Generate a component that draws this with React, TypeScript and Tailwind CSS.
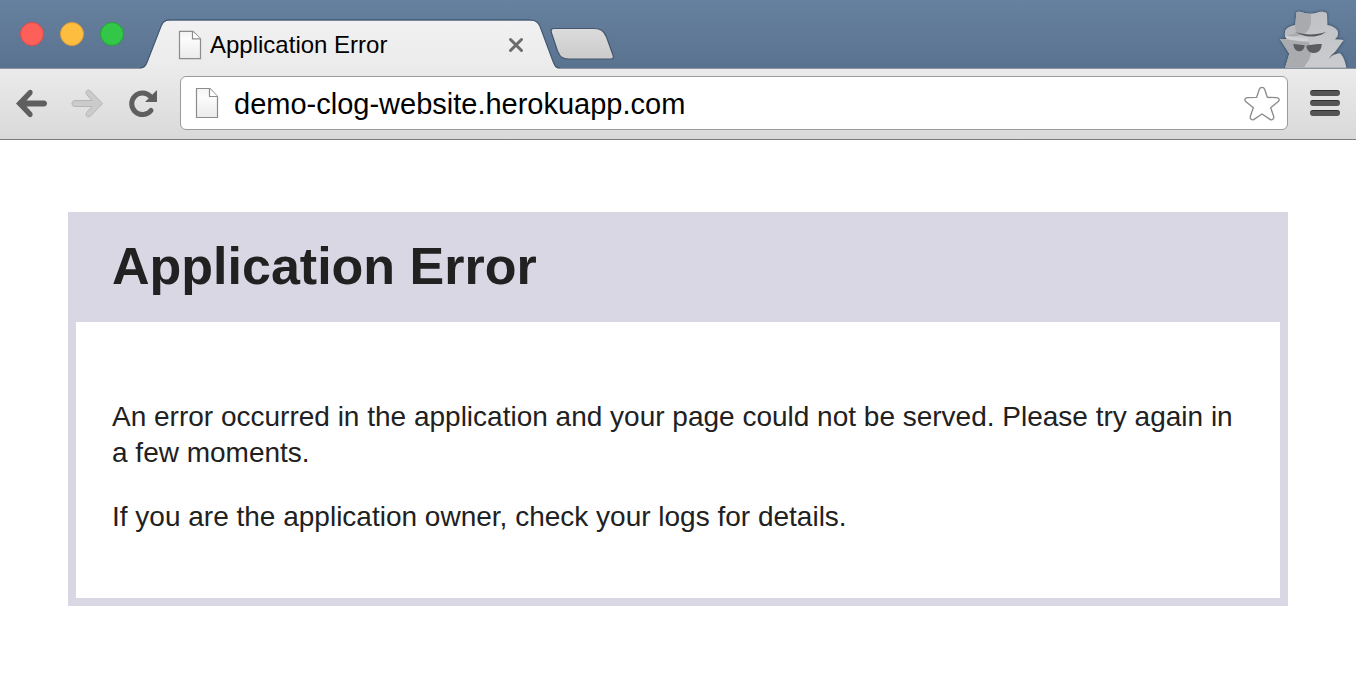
import React, { useState } from "react";

function PageIcon({ className }: { className: string }) {
  return (
    <svg className={className} viewBox="0 0 24 32" fill="none" preserveAspectRatio="none" aria-hidden="true">
      <defs>
        <linearGradient id="paper" x1="0" y1="0" x2="0" y2="1">
          <stop offset="0" stopColor="#f4f4f4" />
          <stop offset="0.3" stopColor="#fcfcfc" />
          <stop offset="1" stopColor="#ebebeb" />
        </linearGradient>
      </defs>
      <path d="M1.5 1.5H15L22.5 9.5V30.5H1.5Z" fill="url(#paper)" stroke="#8c8c8c" strokeWidth="1.2" />
      <path d="M14.5 1.5V9.5H22.5" stroke="#8c8c8c" fill="#fff" strokeWidth="1.2" />
    </svg>
  );
}

function TabShape() {
  const edge =
    "M0 50.5C4 50.5 5.500 49 7 45L21 9C23 4 25 2.500 31 2.500H389C395 2.500 398 4 400 9L413 44C415 49 416 50.5 420 50.5";
  return (
    <svg className="absolute inset-0 h-full w-full" viewBox="0 0 420 51" fill="none" aria-hidden="true">
      <defs>
        <linearGradient id="tab" x1="0" y1="0" x2="0" y2="1">
          <stop offset="0" stopColor="#f1f1f1" />
          <stop offset="1" stopColor="#ebebeb" />
        </linearGradient>
      </defs>
      <path d={edge + "V51H0Z"} fill="url(#tab)" />
      <path d={edge} stroke="#435872" strokeWidth="1.2" transform="translate(0 -.6)" />
      <path d="M5 51V50H415V51Z" fill="#ebebeb" />
    </svg>
  );
}

function Incognito() {
  const outline =
    "M178 206C183 184 190 172 189 162L162 120L184 121C177 117 176 108 177 99C179 88 193 81 208 78L211 42C214 36 223 39 232 41C243 45 259 45 270 42C282 37 300 36 303 45L304 78C320 81 334 89 336 100C337 109 333 117 326 121L353 123L322 166C330 168 336 162 341 163C352 171 357 187 361 206Z";
  return (
    <svg className="h-[59px] w-[74px]" viewBox="150 30 222 177" role="img" aria-label="Incognito">
      <defs>
        <filter id="glow" x="-20%" y="-20%" width="140%" height="140%">
          <feDropShadow dx="0" dy="0" stdDeviation="5" floodColor="#26364a" floodOpacity="1" />
        </filter>
        <linearGradient id="coat" x1="0" y1="0" x2="0" y2="1">
          <stop offset="0" stopColor="#bfc1c4" />
          <stop offset="1" stopColor="#cacccf" />
        </linearGradient>
        <clipPath id="agent">
          <path d={outline} />
        </clipPath>
      </defs>
      <path filter="url(#glow)" fill="url(#coat)" d={outline} />
      <g clipPath="url(#agent)">
        <path d="M170 110C190 114 210 114 233 106C253 93 260 70 252 34H208V78L196 82C210 90 215 98 200 104Z" fill="#a8aaad" />
        <path d="M177 88L208 78V104L176 108Z" fill="#b9bbbe" />
        <path d="M176 108C200 116 222 117 246 117V128C220 127 200 124 182 121Z" fill="#cfd0d2" />
        <path d="M155 117L184 121C205 126 228 128 248 128C257 145 258 162 250 180C245 190 238 198 234 206H165Z" fill="#a9abae" />
        <path d="M309 180C313 169 323 162 342 146L323 168C318 169 314 174 309 180Z" fill="#55585b" />
      </g>
      <path d="M209 98C234 109 272 109 300 98C280 117 232 117 209 98Z" fill="#55585b" />
      <path d="M202 135C213 136 224 137 236 139C235 150 229 157 220 157C210 157 203 148 202 135Z" fill="#5b5d60" />
      <path d="M241 140C255 137 272 135 287 135C287 151 278 162 264 162C251 162 242 154 241 140Z" fill="#5b5d60" />
    </svg>
  );
}

function TabStrip() {
  return (
    <header className="flex h-[69px] items-end justify-between bg-linear-to-b from-[#66819f] to-[#59728f] shadow-[inset_0_-1px_0_#8d949b]">
      <div className="flex items-end self-stretch">
        <div className="flex w-[140px] gap-4 self-start pt-[22px] pl-5">
          <button aria-label="Close window" className="size-6 rounded-full border border-[#e2494a] bg-[#fd6059]" />
          <button aria-label="Minimize window" className="size-6 rounded-full border border-[#dfa035] bg-[#fdbe40]" />
          <button aria-label="Zoom window" className="size-6 rounded-full border border-[#22a334] bg-[#33c748]" />
        </div>
        <div className="relative h-[51px] w-[420px]">
          <TabShape />
          <div className="relative flex h-full items-center gap-2 pt-0.5 pr-9 pl-[38px]">
            <PageIcon className="h-[30px] w-6" />
            <span className="flex-1 text-2xl leading-8 text-black">Application Error</span>
            <button aria-label="Close tab" className="flex size-4 items-center justify-center">
              <svg className="size-4" viewBox="0 0 16 16" fill="none">
                <path d="M2.500 2.500L13.500 13.500M13.500 2.500L2.500 13.500" stroke="#6b6b6b" strokeWidth="3" strokeLinecap="round" />
              </svg>
            </button>
          </div>
        </div>
        <button aria-label="New tab" className="-ml-2.5 mb-2">
          <svg className="h-[34px] w-[66px]" viewBox="0 0 66 34" fill="none">
            <defs>
              <linearGradient id="newtab" x1="0" y1="0" x2="0" y2="1">
                <stop offset="0" stopColor="#dcdcdc" />
                <stop offset="1" stopColor="#cbcbcb" />
              </linearGradient>
            </defs>
            <path
              d="M4 1.500H44C51 1.500 54 4 56.500 10L63 28C64 31 63 32 61 32H19C12 32 10 30 7.500 24L1.500 6C.5 3 1.500 1.500 4 1.500Z"
              fill="url(#newtab)"
              stroke="#43566e"
              strokeWidth="1.2"
            />
          </svg>
        </button>
      </div>
      <div className="pr-1.5 pb-px">
        <Incognito />
      </div>
    </header>
  );
}

function Toolbar() {
  const [url, setUrl] = useState("demo-clog-website.herokuapp.com");
  return (
    <nav
      aria-label="Browser toolbar"
      className="flex h-[71px] items-center border-b border-[#7b7b7b] bg-linear-to-b from-[#ebebeb] to-[#d9d9d9] pr-4 pb-0.5 pl-[15px]"
    >
      <div className="flex items-center gap-[22px]">
        <button aria-label="Back">
          <svg className="h-[30px] w-[34px]" viewBox="0 0 34 30" fill="none">
            <path d="M1 15.500L13 3C16 0 19 3.500 17 6.500L11.500 12.500H29C33 12.500 33 18.500 29 18.500H11.500L17 24.500C19 27.500 16 31 13 28Z" fill="#5f5f5f" />
          </svg>
        </button>
        <button aria-label="Forward" disabled>
          <svg className="h-[30px] w-[34px]" viewBox="0 0 34 30" fill="none">
            <path d="M31.500 15.500L19.500 3C16.500 .5 14 3.500 15.500 6.500L21 12.500H4C0 12.500 0 18.500 4 18.500H21L15.500 24.500C14 27.500 16.500 30.500 19.500 28Z" fill="#cbcbcb" stroke="#b5b5b5" />
          </svg>
        </button>
        <button aria-label="Reload">
          <svg className="h-[30px] w-8" viewBox="0 0 32 30" fill="none">
            <path d="M23.500 8.500A10.800 10.800 0 1 0 24 22.500" stroke="#5f5f5f" strokeWidth="5" strokeLinecap="round" />
            <path d="M30 2V14H18Z" fill="#5f5f5f" />
          </svg>
        </button>
      </div>
      <div className="ml-[21px] flex h-[54px] flex-1 items-center rounded-md border border-[#9b9b9b] bg-white pr-1.5 pl-3.5">
        <PageIcon className="h-8 w-6" />
        <input
          aria-label="Address"
          value={url}
          onChange={(e) => setUrl(e.target.value)}
          className="ml-[15px] h-10 min-w-0 flex-1 bg-transparent pt-1 text-[29px] text-black outline-none"
        />
        <button aria-label="Bookmark this page">
          <svg className="h-[37px] w-[38px]" viewBox="50 251 114 111" fill="none">
            <path
              d="M99 264C102 256 112 256 115 264L123 288L151 289C160 290 161 297 154 302L133 319L142 345C144 353 137 358 131 354L107 338L83 354C77 358 70 353 72 345L81 319L60 302C53 297 54 290 63 289L91 288Z"
              stroke="#8b8b8b"
              strokeWidth="4"
              strokeLinejoin="round"
            />
          </svg>
        </button>
      </div>
      <button aria-label="Menu" className="ml-[22px] flex flex-col gap-1">
        <span className="h-1.5 w-[30px] rounded-full border-t border-[#2f2f2f] bg-[#555555]" />
        <span className="h-1.5 w-[30px] rounded-full border-t border-[#2f2f2f] bg-[#555555]" />
        <span className="h-1.5 w-[30px] rounded-full border-t border-[#2f2f2f] bg-[#555555]" />
      </button>
    </nav>
  );
}

export default function App() {
  return (
    <div className="min-h-screen bg-white font-['Liberation_Sans',Arial,sans-serif]">
      <TabStrip />
      <Toolbar />
      <main className="px-[68px] py-[72px] text-[#212121] max-sm:px-4">
        <article className="border-8 border-[#d9d7e4]">
          <h1 className="bg-[#d9d7e4] px-9 pt-4 pb-[26px] text-[52px] leading-[60px] font-bold">Application Error</h1>
          <div className="flex flex-col gap-7 px-9 pt-[77px] pb-[63px] text-[28px] leading-9">
            <p>An error occurred in the application and your page could not be served. Please try again in a few moments.</p>
            <p>If you are the application owner, check your logs for details.</p>
          </div>
        </article>
      </main>
    </div>
  );
}
